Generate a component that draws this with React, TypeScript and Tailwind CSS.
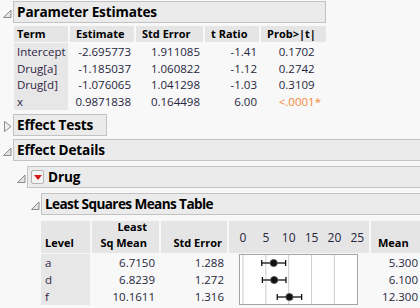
import React from 'react';

const FONT = "font-['Open_Sans',sans-serif]";

const Tri = ({ open }: { open: boolean }) => (
  <svg width="9" height="11" viewBox="0 0 9 11" className="shrink-0">
    {open ? (
      <polygon points="8,2 8,9.5 0.5,9.5" fill="#e4e4e4" stroke="#8c8c8c" strokeWidth="1" />
    ) : (
      <polygon points="1.5,0.5 8,5.5 1.5,10.5" fill="#f0f0f0" stroke="#8c8c8c" strokeWidth="1" />
    )}
  </svg>
);

const RedMenu = () => (
  <div className="w-[13px] h-[14px] mr-[4px] rounded-[2px] border border-[#b4b4b4] bg-[#f4f4f4] flex items-center justify-center shrink-0">
    <svg width="8" height="5" viewBox="0 0 8 5">
      <polygon points="0,0 8,0 4,5" fill="#d21a1a" />
    </svg>
  </div>
);

type HeaderProps = { title: string; open: boolean; width?: string; menu?: boolean; tight?: boolean };

const OutlineHeader = ({ title, open, width, menu, tight }: HeaderProps) => (
  <div className="flex items-center h-[22px]">
    <div className="w-[13px] flex justify-center pl-[2px] pt-[3px]">
      <Tri open={open} />
    </div>
    <div
      className={`h-[22px] border border-[#c3c3c3] bg-[#ebebeb] flex items-center pl-[3px] text-[13.6px] font-bold text-black ${
        tight ? 'tracking-[-0.6px]' : 'tracking-[-0.15px]'
      } ${width ?? 'flex-1 -mr-[4px]'}`}
    >
      {menu && <RedMenu />}
      {title}
    </div>
  </div>
);

const params = [
  { term: 'Intercept', est: '-2.695773', se: '1.911085', t: '-1.41', p: '0.1702', sig: false },
  { term: 'Drug[a]', est: '-1.185037', se: '1.060822', t: '-1.12', p: '0.2742', sig: false },
  { term: 'Drug[d]', est: '-1.076065', se: '1.041298', t: '-1.03', p: '0.3109', sig: false },
  { term: 'x', est: '0.9871838', se: '0.164498', t: '6.00', p: '<.0001', sig: true },
];

const lsm = [
  { level: 'a', mean: 6.715, lsm: '6.7150', se: '1.288', seVal: 1.288, raw: '5.300' },
  { level: 'd', mean: 6.8239, lsm: '6.8239', se: '1.272', seVal: 1.272, raw: '6.100' },
  { level: 'f', mean: 10.1611, lsm: '10.1611', se: '1.316', seVal: 1.316, raw: '12.300' },
];

const sx = (v: number) => 14 + v * 4.57;

const ParameterTable = () => (
  <div className="ml-[14px] mt-[3px] grid grid-cols-[54px_64px_67px_54px_65px] gap-x-[2px] text-[11.5px] text-[#26263c]">
    {['Term', 'Estimate', 'Std Error', 't Ratio', 'Prob>|t|'].map((h, i) => (
      <div
        key={h}
        className={`h-[16px] mb-[1px] bg-[#e5e5e5] flex items-center text-[11px] font-bold text-black ${
          i === 0 ? 'pl-[3px]' : 'pl-[6px]'
        }`}
      >
        {h}
      </div>
    ))}
    {params.map((r) => (
      <React.Fragment key={r.term}>
        <div className="h-[16.75px] bg-[#e7e7e7] flex items-center pl-[3px] text-[#2f2545]">{r.term}</div>
        <div className="h-[16.75px] flex items-center justify-end pr-[3px]">{r.est}</div>
        <div className="h-[16.75px] flex items-center justify-end pr-[3px]">{r.se}</div>
        <div className="h-[16.75px] flex items-center justify-end pr-[2px]">{r.t}</div>
        <div className={`h-[16.75px] flex items-center justify-end pr-[5px] ${r.sig ? 'text-[#f0883a]' : ''}`}>
          {r.p}
          <span className={r.sig ? '' : 'invisible'}>*</span>
        </div>
      </React.Fragment>
    ))}
  </div>
);

const LsmTable = () => (
  <div className="ml-[41px] mt-[6px] grid grid-cols-[49px_67px_66px_140px_60px] grid-rows-[33px_17px_17px_17px] gap-x-[2px] text-[11.5px] text-[#26263c]">
    <div className="h-[32px] bg-[#e5e5e5] flex items-end pl-[4px] pb-[2px] text-[11px] font-bold text-black">Level</div>
    <div className="h-[32px] bg-[#e5e5e5] flex flex-col items-end justify-end pr-[12px] pb-[2px] text-[11px] font-bold text-black leading-[16px]">
      <span>Least</span>
      <span>Sq Mean</span>
    </div>
    <div className="h-[32px] bg-[#e5e5e5] flex items-end justify-end pr-[5px] pb-[2px] text-[11px] font-bold text-black">Std Error</div>
    <div className="h-[32px] bg-[#e5e5e5]">
      <svg width="140" height="32" viewBox="0 0 140 32">
        {[0, 5, 10, 15, 20, 25].map((v) => (
          <text
            key={v}
            x={sx(v)}
            y="21"
            textAnchor="middle"
            fontSize="12"
            fill="#26263c"
            fontFamily="'Open Sans', sans-serif"
          >
            {v}
          </text>
        ))}
      </svg>
    </div>
    <div className="h-[32px] bg-[#e5e5e5] flex items-end pl-[7px] pb-[2px] text-[11px] font-bold text-black">Mean</div>

    {lsm.map((r, i) => (
      <React.Fragment key={r.level}>
        <div className="bg-[#e7e7e7] flex items-center pl-[4px] text-[#2f2545]">{r.level}</div>
        <div className="flex items-center justify-end pr-[4px]">{r.lsm}</div>
        <div className="flex items-center justify-end pr-[3px]">{r.se}</div>
        {i === 0 && (
          <div className="row-span-3">
            <svg width="140" height="51" viewBox="0 0 140 51">
              <rect x="10.5" y="0.5" width="118" height="50" fill="#ffffff" stroke="#a4a4a4" />
              {[0, 5, 10, 15, 20].map((v) => (
                <line key={v} x1={sx(v)} x2={sx(v)} y1="1" y2="50" stroke="#cdcdcd" />
              ))}
              {lsm.map((p, j) => {
                const cy = 9 + j * 17;
                const lo = sx(p.mean - p.seVal * 2.03);
                const hi = sx(p.mean + p.seVal * 2.03);
                return (
                  <g key={p.level}>
                    <line x1={lo} x2={hi} y1={cy} y2={cy} stroke="#111" strokeWidth="1.3" />
                    <line x1={lo} x2={lo} y1={cy - 3} y2={cy + 3} stroke="#111" strokeWidth="1.3" />
                    <line x1={hi} x2={hi} y1={cy - 3} y2={cy + 3} stroke="#111" strokeWidth="1.3" />
                    <circle cx={sx(p.mean)} cy={cy} r="3.6" fill="#111" stroke="#555" strokeWidth="0.8" />
                  </g>
                );
              })}
            </svg>
          </div>
        )}
        <div className="flex items-center justify-end pr-[13px]">{r.raw}</div>
      </React.Fragment>
    ))}
  </div>
);

const App = () => {
  return (
    <div className={`w-[420px] h-[308px] overflow-hidden bg-[#f8f8f8] ${FONT}`}>
      <div className="pt-[1px] flex flex-col">
        <OutlineHeader title="Parameter Estimates" open width="w-[313px]" />
        <ParameterTable />

        <div className="mt-[4px]">
          <OutlineHeader title="Effect Tests" open={false} width="w-[94px]" />
        </div>
        <div className="mt-[3px]">
          <OutlineHeader title="Effect Details" open />
        </div>
        <div className="mt-[5px] ml-[14px]">
          <OutlineHeader title="Drug" open menu />
        </div>
        <div className="mt-[5px] ml-[28px]">
          <OutlineHeader title="Least Squares Means Table" open tight />
        </div>
        <LsmTable />
      </div>
    </div>
  );
};

export default App;
